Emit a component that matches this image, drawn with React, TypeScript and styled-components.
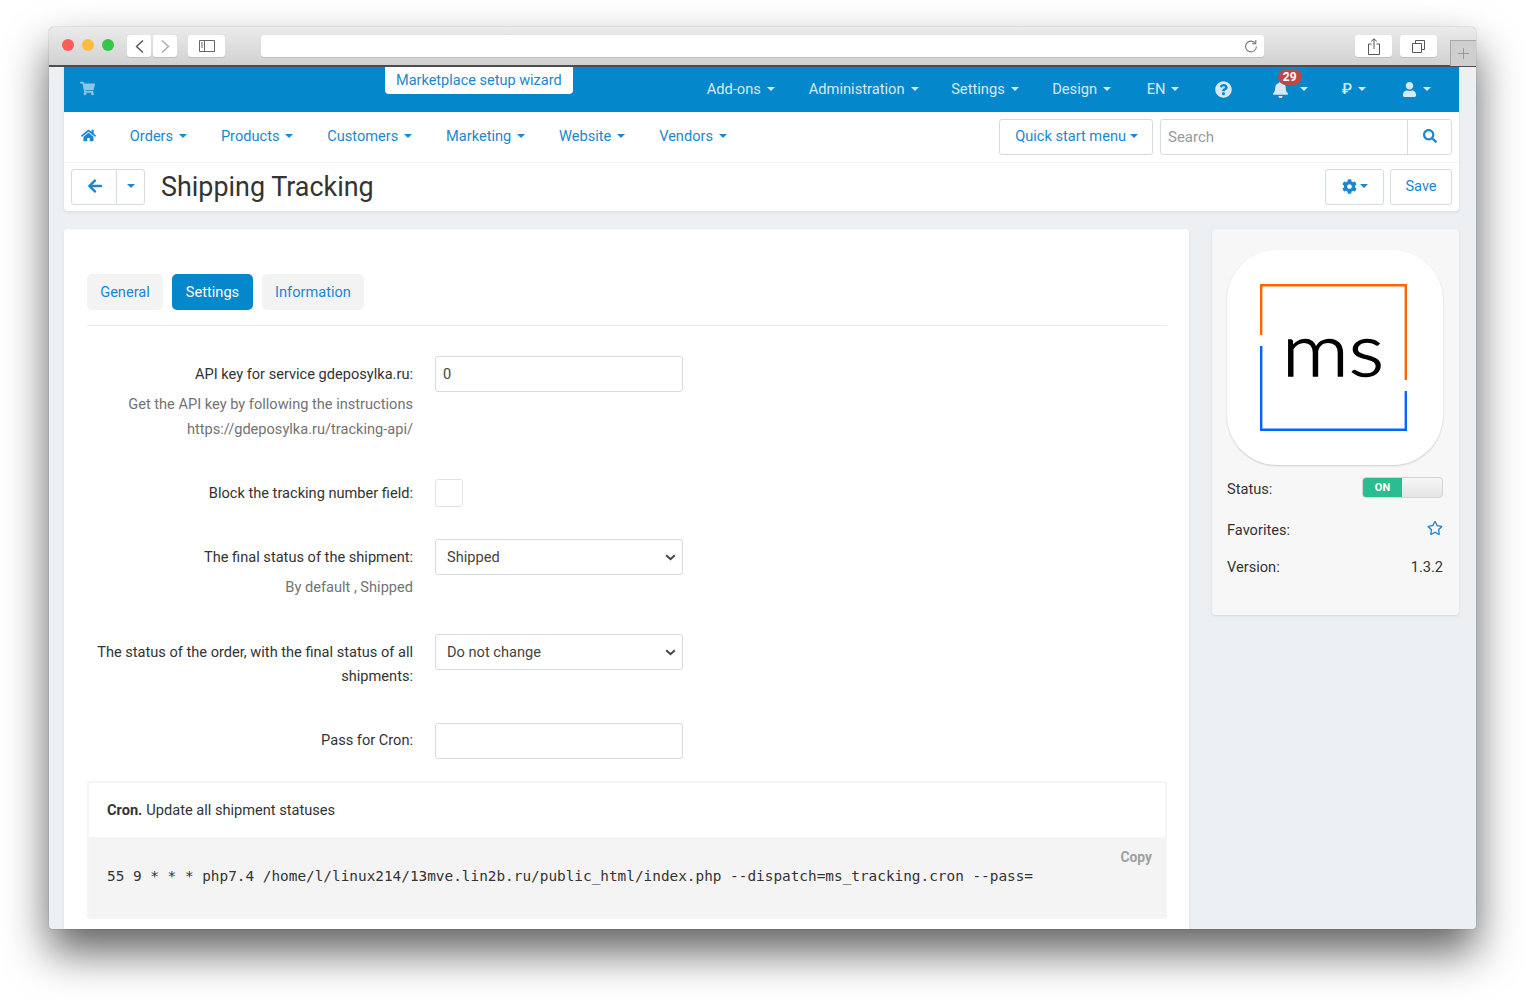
import { createGlobalStyle, styled } from 'styled-components';
import {
  FaArrowLeft,
  FaBell,
  FaCog,
  FaHome,
  FaQuestionCircle,
  FaRegStar,
  FaSearch,
  FaShoppingCart,
  FaUser,
} from 'react-icons/fa';

const BLUE = '#0587cb';
const LINK = '#1b87d0';
const BASE = '14.6px';

const GlobalStyle = createGlobalStyle`
  html, body {
    margin: 0;
    padding: 0;
    background: #fff;
    overflow: hidden;
  }
  body {
    font-family: Roboto, 'Liberation Sans', sans-serif;
    font-size: 14.5px;
    color: #333;
  }
`;

const Page = styled.div`
  width: 1525px;
  height: 1000px;
  padding: 27px 49px 0;
  box-sizing: border-box;
  overflow: hidden;
`;

const Window = styled.div`
  width: 1427px;
  height: 902px;
  display: flex;
  flex-direction: column;
  border-radius: 5px 5px 3px 3px;
  overflow: hidden;
  background: #edf0f3;
  box-shadow: 0 23px 44px rgba(0, 0, 0, 0.62), 0 0 1px rgba(0, 0, 0, 0.6);
`;

const TitleBar = styled.div`
  height: 40px;
  flex: none;
  display: flex;
  align-items: flex-start;
  padding-top: 8px;
  box-sizing: border-box;
  background: linear-gradient(#ebebeb, #d1d1d1);
  border-bottom: 2px solid #4d4d4d;
`;

const Lights = styled.div`
  display: flex;
  gap: 8px;
  margin: 4px 0 0 13px;
`;

const Light = styled.span<{ $color: string }>`
  width: 12px;
  height: 12px;
  border-radius: 50%;
  background: ${({ $color }) => $color};
`;

const ChromeButton = styled.div<{ $width: number; $left?: number }>`
  width: ${({ $width }) => $width}px;
  height: 22px;
  margin-left: ${({ $left }) => $left || 0}px;
  flex: none;
  display: flex;
  align-items: center;
  justify-content: center;
  background: #fff;
  border-radius: 3px;
  box-shadow: 0 1px 0 #bdbdbd;
`;

const UrlBar = styled(ChromeButton)`
  justify-content: flex-end;
  padding-right: 6px;
  box-sizing: border-box;
`;

const NewTab = styled.div`
  width: 26px;
  height: 26px;
  margin: 5px 0 0 13px;
  flex: none;
  display: flex;
  align-items: center;
  justify-content: center;
  background: #cfcfcf;
  border-left: 1px solid #a9a9a9;
  border-top: 1px solid #a9a9a9;
  box-sizing: border-box;
`;

const Content = styled.div`
  flex: 1;
  min-height: 0;
  padding: 0 17px 0 15px;
  overflow: hidden;
`;

const Header = styled.div`
  background: #fff;
  border-radius: 0 0 4px 4px;
  box-shadow: 0 1px 3px rgba(0, 0, 0, 0.1);
`;

const TopBar = styled.div`
  height: 45px;
  display: flex;
  align-items: center;
  background: ${BLUE};
  color: #d6eaf6;
`;

const CartIcon = styled.span`
  display: flex;
  margin: -3px 0 0 16px;
  color: #8cc6e6;
  font-size: 15px;
`;

const Wizard = styled.a`
  align-self: flex-start;
  height: 27px;
  margin-left: 290px;
  padding: 0 11px;
  display: flex;
  align-items: center;
  background: #fff;
  color: ${LINK};
  border-radius: 0 0 4px 4px;
`;

const TopMenu = styled.div`
  display: flex;
  align-items: center;
  margin: -1px 0 0 134px;
`;

const TopItem = styled.span<{ $width: number }>`
  position: relative;
  width: ${({ $width }) => $width}px;
  display: flex;
  align-items: center;
  font-size: 14.7px;
  font-weight: 400;
`;

const Ruble = styled.span`
  font-size: 15px;
  font-weight: 500;
`;

const Caret = styled.i<{ $left?: number }>`
  display: inline-block;
  width: 0;
  height: 0;
  margin-left: ${({ $left }) => $left ?? 6}px;
  border-top: 4px solid currentColor;
  border-left: 4px solid transparent;
  border-right: 4px solid transparent;
`;

const Badge = styled.span`
  position: absolute;
  left: 6px;
  top: -12px;
  width: 24px;
  height: 16px;
  display: flex;
  align-items: center;
  justify-content: center;
  border-radius: 8px;
  background: #b94a4a;
  color: #fff;
  font-size: 12px;
  font-weight: 700;
`;

const NavBar = styled.div`
  height: 50px;
  display: flex;
  align-items: center;
  padding: 0 7px 0 0;
  border-bottom: 1px solid #f3f3f3;
`;

const HomeIcon = styled.a`
  display: flex;
  margin: -3px 0 0 17px;
  color: ${LINK};
  font-size: 15px;
`;

const NavItem = styled.a`
  margin: -2px 0 0 33.8px;
  display: flex;
  align-items: center;
  color: ${LINK};
  font-size: ${BASE};
`;

const OutlineButton = styled.button`
  height: 36px;
  padding: 0 14px 2px;
  display: flex;
  align-items: center;
  background: #fff;
  color: ${LINK};
  border: 1px solid #d3dce3;
  border-radius: 3px;
  font: inherit;
  font-size: ${BASE};
`;

const QuickStart = styled(OutlineButton)`
  margin-left: auto;
  padding: 0 14px 2px 15px;
`;

const SearchBox = styled.div`
  width: 292px;
  height: 36px;
  margin-left: 7px;
  display: flex;
  box-sizing: border-box;
  border: 1px solid #d3dce3;
  border-radius: 3px;
`;

const SearchInput = styled.input`
  flex: 1;
  min-width: 0;
  padding: 0 7px;
  border: 0;
  outline: 0;
  background: transparent;
  font: inherit;
  font-size: 15px;
  &::placeholder {
    color: #9a9a9a;
    opacity: 1;
  }
`;

const SearchButton = styled.span`
  width: 44px;
  padding: 0 0 2px 1px;
  box-sizing: border-box;
  display: flex;
  align-items: center;
  justify-content: center;
  border-left: 1px solid #d3dce3;
  color: ${LINK};
  font-size: 14px;
`;

const ActionBar = styled.div`
  height: 48px;
  display: flex;
  align-items: center;
  padding: 0 7px;
`;

const BackGroup = styled.div`
  width: 74px;
  height: 36px;
  display: flex;
  box-sizing: border-box;
  border: 1px solid #d3dce3;
  border-radius: 3px;
  color: ${LINK};
`;

const BackPart = styled.span<{ $narrow?: boolean }>`
  flex: ${({ $narrow }) => ($narrow ? '0 0 27px' : 1)};
  padding: ${({ $narrow }) => ($narrow ? '0 0 2px' : '0 0 2px 1px')};
  display: flex;
  align-items: center;
  justify-content: center;
  font-size: 16px;
  border-left: ${({ $narrow }) => ($narrow ? '1px solid #d3dce3' : '0')};
`;

const PageTitle = styled.h1`
  margin: 0 0 0 16px;
  font-size: 26.9px;
  font-weight: 400;
  color: #333;
`;

const GearButton = styled(OutlineButton)`
  margin-left: auto;
  width: 59px;
  padding: 0 0 2px 1px;
  justify-content: center;
  font-size: 15px;
`;

const SaveButton = styled(OutlineButton)`
  width: 62px;
  margin-left: 6px;
  padding: 0 0 2px;
  justify-content: center;
`;

const Columns = styled.div`
  display: flex;
  align-items: flex-start;
  gap: 23px;
  margin-top: 18px;
`;

const MainCard = styled.div`
  width: 1125px;
  flex: none;
  padding: 45px 22px 40px 23px;
  box-sizing: border-box;
  background: #fff;
  border-radius: 4px;
  box-shadow: 0 1px 3px rgba(0, 0, 0, 0.06);
`;

const Tabs = styled.div`
  display: flex;
  gap: 9px;
  padding-bottom: 15px;
  border-bottom: 1px solid #e8ebee;
`;

const Tab = styled.a<{ $active?: boolean; $width: number }>`
  width: ${({ $width }) => $width}px;
  height: 36px;
  display: flex;
  align-items: center;
  justify-content: center;
  border-radius: 5px;
  background: ${({ $active }) => ($active ? BLUE : '#f3f3f3')};
  color: ${({ $active }) => ($active ? '#fff' : LINK)};
  font-size: ${BASE};
`;

const Form = styled.div`
  display: flex;
  flex-direction: column;
  padding-top: 30px;
`;

const Field = styled.div<{ $gap: number }>`
  display: grid;
  grid-template-columns: 326px 248px;
  column-gap: 22px;
  margin-bottom: ${({ $gap }) => $gap}px;
`;

const LabelCol = styled.div<{ $top?: number }>`
  text-align: right;
  padding-top: ${({ $top }) => $top ?? 6}px;
`;

const Label = styled.div`
  font-size: ${BASE};
  line-height: 24px;
  color: #333;
`;

const Hint = styled.div`
  font-size: ${BASE};
  line-height: 25px;
  color: #737373;
  ${Label} + & {
    margin-top: 6px;
  }
`;

const TextInput = styled.input`
  width: 248px;
  height: 36px;
  padding: 0 7px;
  box-sizing: border-box;
  border: 1px solid #d3dce3;
  border-radius: 3px;
  background: #fff;
  color: #444;
  font: inherit;
  font-size: ${BASE};
`;

const SelectWrap = styled.div`
  position: relative;
  width: 248px;
  height: 36px;
`;

const Select = styled.select`
  width: 100%;
  height: 100%;
  padding: 0 11px;
  box-sizing: border-box;
  appearance: none;
  border: 1px solid #d3dce3;
  border-radius: 3px;
  background: #fff;
  color: #444;
  font: inherit;
  font-size: ${BASE};
`;

const Chevron = styled.svg`
  position: absolute;
  right: 7px;
  top: 15px;
  pointer-events: none;
`;

const CheckBox = styled.span`
  display: block;
  width: 28px;
  height: 28px;
  box-sizing: border-box;
  border: 1px solid #dfe3e6;
  border-radius: 3px;
  background: #fff;
`;

const CronCard = styled.div`
  margin-top: 22px;
  border: 2px solid #f5f5f5;
  border-radius: 3px;
`;

const CronTitle = styled.div`
  height: 54px;
  display: flex;
  align-items: center;
  padding-left: 18px;
  font-size: ${BASE};
  gap: 4px;
  b {
    font-weight: 700;
  }
`;

const CodeBlock = styled.div`
  position: relative;
  height: 80px;
  display: flex;
  align-items: center;
  padding: 0 0 2px 18px;
  box-sizing: border-box;
  background: #f4f4f4;
  font-family: 'DejaVu Sans Mono', monospace;
  font-size: 14.38px;
  color: #333;
  white-space: pre;
`;

const CopyLabel = styled.span`
  position: absolute;
  right: 13px;
  top: 12px;
  font-family: Roboto, sans-serif;
  font-size: 13.8px;
  font-weight: 700;
  color: #a0a0a0;
`;

const SideCard = styled.div`
  width: 247px;
  height: 386px;
  flex: none;
  padding: 21px 16px 0 15px;
  box-sizing: border-box;
  background: #f7f7f7;
  border-radius: 4px;
  box-shadow: 0 1px 3px rgba(0, 0, 0, 0.1);
`;

const LogoTile = styled.div`
  width: 216px;
  height: 215px;
  display: flex;
  align-items: center;
  justify-content: center;
  background: #fff;
  border-radius: 50px;
  box-shadow: 0 1px 2px rgba(0, 0, 0, 0.18);
`;

const LogoMark = styled.svg`
  margin-right: 3px;
`;

const LogoText = styled.text`
  font-family: Lato, 'Open Sans', sans-serif;
  font-size: 73px;
  font-weight: 300;
  fill: #000;
  stroke: #000;
  stroke-width: 1.3px;
`;

const InfoRow = styled.div<{ $height: number; $top?: number }>`
  height: ${({ $height }) => $height}px;
  margin-top: ${({ $top }) => $top || 0}px;
  display: flex;
  align-items: center;
  justify-content: space-between;
  font-size: ${BASE};
`;

const Toggle = styled.div`
  width: 81px;
  height: 21px;
  margin-top: -3px;
  display: flex;
  box-sizing: border-box;
  border: 1px solid #d5d5d5;
  border-radius: 4px;
  overflow: hidden;
  background: linear-gradient(#f6f6f6, #e4e4e4);
`;

const ToggleOn = styled.span`
  width: 39px;
  display: flex;
  align-items: center;
  justify-content: center;
  background: #2bbd92;
  color: #fff;
  font-size: 11px;
  font-weight: 700;
`;

const StarIcon = styled.span`
  display: flex;
  margin-top: -5px;
  color: #1b87d0;
  font-size: 16px;
`;

const topItems = [
  { label: 'Add-ons', width: 102 },
  { label: 'Administration', width: 142.5 },
  { label: 'Settings', width: 101 },
  { label: 'Design', width: 94.5 },
  { label: 'EN', width: 68 },
];

const navItems = ['Orders', 'Products', 'Customers', 'Marketing', 'Website', 'Vendors'];

function Logo() {
  return (
    <LogoMark width="147" height="147" viewBox="0 0 147 147">
      <path d="M1.2 51V1.2H145.8V96" fill="none" stroke="#ff6600" strokeWidth="2.4" />
      <path d="M1.2 62V145.8H145.8V107" fill="none" stroke="#0066ff" strokeWidth="2.4" />
      <LogoText x="22" y="92" textLength="102" lengthAdjust="spacingAndGlyphs">ms</LogoText>
    </LogoMark>
  );
}

function SelectField({ value }: { value: string }) {
  return (
    <SelectWrap>
      <Select defaultValue={value}>
        <option>{value}</option>
      </Select>
      <Chevron width="11" height="7" viewBox="0 0 11 7">
        <path d="M1.2 1.2L5.5 5.3L9.8 1.2" fill="none" stroke="#444" strokeWidth="1.9" />
      </Chevron>
    </SelectWrap>
  );
}

export default function App() {
  return (
    <Page>
      <GlobalStyle />
      <Window>
        <TitleBar>
          <Lights>
            <Light $color="#fc5b57" />
            <Light $color="#fdbc40" />
            <Light $color="#34c84a" />
          </Lights>
          <ChromeButton $width={24} $left={13}>
            <svg width="11" height="15" viewBox="0 0 11 15">
              <path d="M9 1.5L2.5 7.5L9 13.5" fill="none" stroke="#555" strokeWidth="1.4" />
            </svg>
          </ChromeButton>
          <ChromeButton $width={24} $left={2}>
            <svg width="11" height="15" viewBox="0 0 11 15">
              <path d="M2 1.5L8.5 7.5L2 13.5" fill="none" stroke="#aaa" strokeWidth="1.4" />
            </svg>
          </ChromeButton>
          <ChromeButton $width={37} $left={11}>
            <svg width="16" height="12" viewBox="0 0 16 12">
              <path
                d="M.5.5H15.5V11.5H.5ZM5.5.5V11.5M2 3H4M2 5H4M2 7H4"
                fill="none"
                stroke="#666"
              />
            </svg>
          </ChromeButton>
          <UrlBar $width={1003} $left={36}>
            <svg width="14" height="14" viewBox="0 0 14 14">
              <path
                d="M11.5 4.5A5.4 5.4 0 1 0 12.4 7.5M11.8 1V4.8H8"
                fill="none"
                stroke="#777"
                strokeWidth="1.1"
              />
            </svg>
          </UrlBar>
          <ChromeButton $width={37} $left={91}>
            <svg width="12" height="17" viewBox="0 0 12 17">
              <path
                d="M3.5 6H.5V16.5H11.5V6H8.5M6 11V.8M3.2 3.4L6 .8L8.8 3.4"
                fill="none"
                stroke="#555"
              />
            </svg>
          </ChromeButton>
          <ChromeButton $width={37} $left={8}>
            <svg width="13" height="13" viewBox="0 0 13 13">
              <path d="M.5 3.5H9.5V12.5H.5ZM3.5 3.5V.5H12.5V9.5H9.5" fill="none" stroke="#555" />
            </svg>
          </ChromeButton>
          <NewTab>
            <svg width="11" height="11" viewBox="0 0 11 11">
              <path d="M5.5 0V11M0 5.5H11" stroke="#999" />
            </svg>
          </NewTab>
        </TitleBar>
        <Content>
          <Header>
            <TopBar>
              <CartIcon>
                <FaShoppingCart />
              </CartIcon>
              <Wizard>Marketplace setup wizard</Wizard>
              <TopMenu>
                {topItems.map((item) => (
                  <TopItem key={item.label} $width={item.width}>
                    {item.label}
                    <Caret />
                  </TopItem>
                ))}
                <TopItem $width={57}>
                  <FaQuestionCircle size={17} />
                </TopItem>
                <TopItem $width={70}>
                  <FaBell size={17} />
                  <Caret $left={11} />
                  <Badge>29</Badge>
                </TopItem>
                <TopItem $width={60}>
                  <Ruble>₽</Ruble>
                  <Caret />
                </TopItem>
                <TopItem $width={40}>
                  <FaUser size={15} />
                  <Caret />
                </TopItem>
              </TopMenu>
            </TopBar>
            <NavBar>
              <HomeIcon>
                <FaHome />
              </HomeIcon>
              {navItems.map((label) => (
                <NavItem key={label}>
                  {label}
                  <Caret />
                </NavItem>
              ))}
              <QuickStart>
                Quick start menu
                <Caret $left={4} />
              </QuickStart>
              <SearchBox>
                <SearchInput placeholder="Search" />
                <SearchButton>
                  <FaSearch />
                </SearchButton>
              </SearchBox>
            </NavBar>
            <ActionBar>
              <BackGroup>
                <BackPart>
                  <FaArrowLeft />
                </BackPart>
                <BackPart $narrow>
                  <Caret $left={0} />
                </BackPart>
              </BackGroup>
              <PageTitle>Shipping Tracking</PageTitle>
              <GearButton>
                <FaCog />
                <Caret $left={3} />
              </GearButton>
              <SaveButton>Save</SaveButton>
            </ActionBar>
          </Header>
          <Columns>
            <MainCard>
              <Tabs>
                <Tab $width={76}>General</Tab>
                <Tab $active $width={81}>Settings</Tab>
                <Tab $width={102}>Information</Tab>
              </Tabs>
              <Form>
                <Field $gap={37}>
                  <LabelCol>
                    <Label>API key for service gdeposylka.ru:</Label>
                    <Hint>Get the API key by following the instructions</Hint>
                    <Hint>https://gdeposylka.ru/tracking-api/</Hint>
                  </LabelCol>
                  <div>
                    <TextInput defaultValue="0" />
                  </div>
                </Field>
                <Field $gap={32}>
                  <LabelCol $top={2}>
                    <Label>Block the tracking number field:</Label>
                  </LabelCol>
                  <div>
                    <CheckBox />
                  </div>
                </Field>
                <Field $gap={34}>
                  <LabelCol>
                    <Label>The final status of the shipment:</Label>
                    <Hint>By default , Shipped</Hint>
                  </LabelCol>
                  <SelectField value="Shipped" />
                </Field>
                <Field $gap={35}>
                  <LabelCol>
                    <Label>The status of the order, with the final status of all shipments:</Label>
                  </LabelCol>
                  <SelectField value="Do not change" />
                </Field>
                <Field $gap={0}>
                  <LabelCol $top={5}>
                    <Label>Pass for Cron:</Label>
                  </LabelCol>
                  <div>
                    <TextInput />
                  </div>
                </Field>
              </Form>
              <CronCard>
                <CronTitle>
                  <b>Cron.</b> Update all shipment statuses
                </CronTitle>
                <CodeBlock>
                  55 9 * * * php7.4 /home/l/linux214/13mve.lin2b.ru/public_html/index.php --dispatch=ms_tracking.cron --pass=
                  <CopyLabel>Copy</CopyLabel>
                </CodeBlock>
              </CronCard>
            </MainCard>
            <SideCard>
              <LogoTile>
                <Logo />
              </LogoTile>
              <InfoRow $height={20} $top={14}>
                Status:
                <Toggle>
                  <ToggleOn>ON</ToggleOn>
                </Toggle>
              </InfoRow>
              <InfoRow $height={20} $top={21}>
                Favorites:
                <StarIcon>
                  <FaRegStar />
                </StarIcon>
              </InfoRow>
              <InfoRow $height={20} $top={17}>
                Version:
                <span>1.3.2</span>
              </InfoRow>
            </SideCard>
          </Columns>
        </Content>
      </Window>
    </Page>
  );
}
